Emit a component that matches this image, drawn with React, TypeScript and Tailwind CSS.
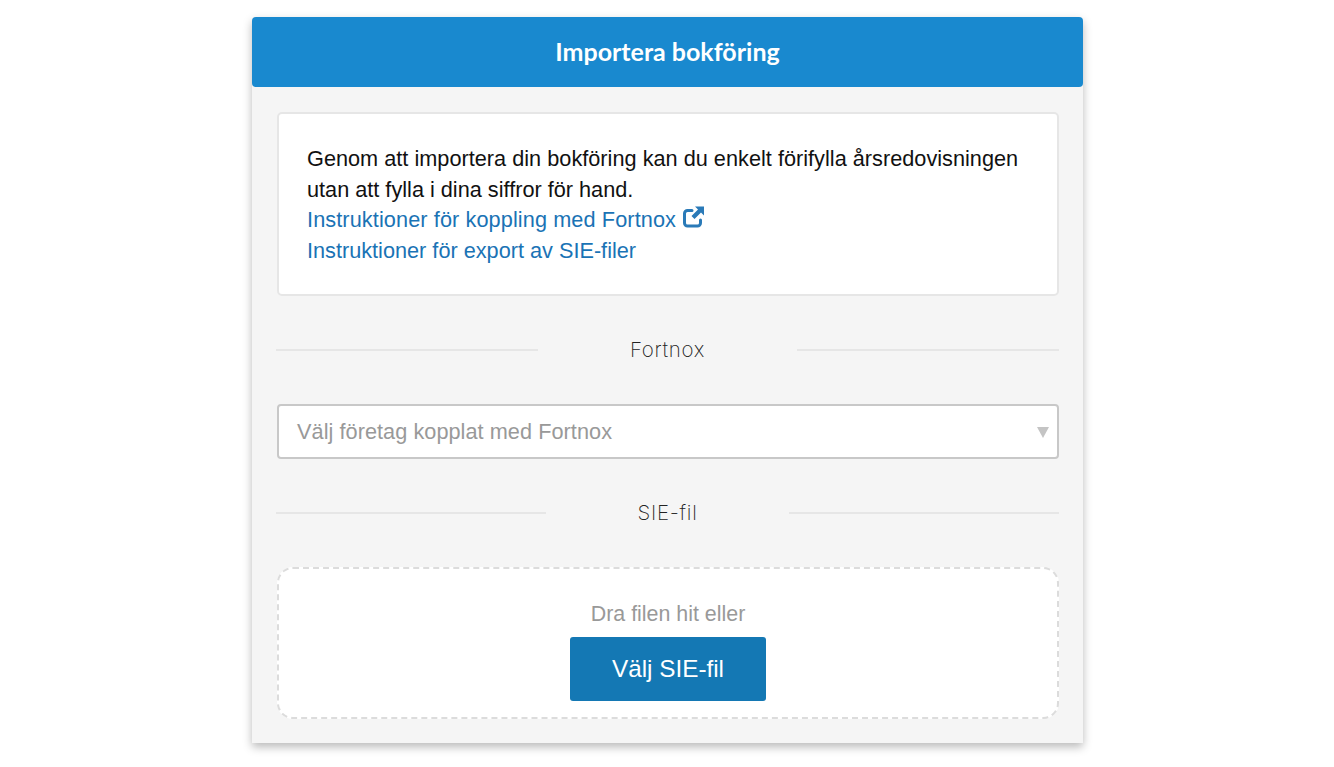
import React from "react";

function Divider({ label }: { label: string }) {
  return (
    <div className="flex items-center h-6 -ml-px">
      <div className="flex-1 h-[2px] bg-[#e6e6e6]" />
      <span className="px-[92px] text-[20.5px] leading-6 font-extralight tracking-[0.7px] text-[#222222] font-['Inter',sans-serif]">{label}</span>
      <div className="flex-1 h-[2px] bg-[#e6e6e6]" />
    </div>
  );
}

function ExternalIcon() {
  return (
    <svg viewBox="0 0 22 22" className="inline-block w-[22px] h-[22px] ml-[6px] align-[-1px]" fill="none">
      <path d="M10 4.5H5.5A3 3 0 0 0 2.5 7.5v9.5a3 3 0 0 0 3 3h10a3 3 0 0 0 3-3V14" stroke="#2a7ab8" strokeWidth="3" strokeLinecap="round" />
      <path d="M13 0.5h9v9l-3-3-6.5 6.5-3-3 6.5-6.5z" fill="#2a7ab8" />
    </svg>
  );
}

export default function App() {
  return (
    <div className="min-h-[767px] bg-white pt-[17px] font-['Liberation_Sans',Arial,sans-serif]">
      <div className="ml-[252px] w-[831px] h-[726px] rounded-t-[4px] bg-[#f5f5f5] shadow-[0_4px_10px_rgba(0,0,0,0.28)]">
        <div className="h-[70px] flex items-center justify-center rounded-[4px] bg-[#1989cf] text-white text-[25px] font-bold font-['Lato',sans-serif]">
          Importera bokföring
        </div>
        <div className="pl-[25px] pr-[24px] pt-[25px]">
          <div className="h-[184px] rounded-[5px] border-2 border-[#e6e6e6] bg-white pl-[28px] pr-[20px] pt-[30px] text-[21.7px] leading-[30.6px] text-[#111111]">
            <div className="whitespace-nowrap tracking-[0.015px]">Genom att importera din bokföring kan du enkelt förifylla årsredovisningen</div>
            <div>utan att fylla i dina siffror för hand.</div>
            <div className="text-[#1a73b5] whitespace-nowrap tracking-[0.1px]">
              Instruktioner för koppling med Fortnox
              <ExternalIcon />
            </div>
            <div className="text-[#1a73b5]">Instruktioner för export av SIE-filer</div>
          </div>

          <div className="mt-[42px]">
            <Divider label="Fortnox" />
          </div>

          <div className="mt-[42px] relative h-[55px] rounded-[4px] border-2 border-[#c8c8c8] bg-white flex items-center pl-[18px] pt-[2px] text-[21.7px] tracking-[0.05px] text-[#999999]">
            Välj företag kopplat med Fortnox
            <span className="absolute right-[8px] top-[21px] w-0 h-0 border-x-[6px] border-x-transparent border-t-[11px] border-t-[#c4c4c4]" />
          </div>

          <div className="mt-[42px]">
            <Divider label="SIE-fil" />
          </div>

          <div className="mt-[42px] h-[152px] rounded-[16px] border-2 border-dashed border-[#dcdcdc] bg-white flex flex-col items-center pt-[32px]">
            <div className="text-[21.4px] leading-[26px] text-[#999999]">Dra filen hit eller</div>
            <button className="mt-[10px] w-[196px] h-[64px] rounded-[3px] bg-[#1478b4] text-white text-[24.3px]">
              Välj SIE-fil
            </button>
          </div>
        </div>
      </div>
    </div>
  );
}
